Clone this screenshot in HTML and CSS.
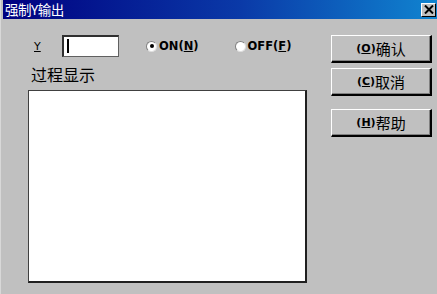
FILE: index.html
```html
<!DOCTYPE html>
<html>
<head>
<meta charset="utf-8">
<link rel="stylesheet" href="styles.css">
</head>
<body>
<div class="win">
  <div class="titlebar">
    <span class="title">强制Y输出</span>
    <span class="close">
      <svg width="10" height="9" viewBox="0 0 10 9"><path d="M1 0.5 L9 8.5 M9 0.5 L1 8.5" stroke="#000" stroke-width="2"/></svg>
    </span>
  </div>
  <div class="body">
    <div class="left">
      <div class="row1">
        <span class="ylabel"><u>Y</u></span>
        <span class="input"><span class="caret"></span></span>
        <span class="radio on"><span class="dot"></span></span>
        <span class="rlabel">ON(<u>N</u>)</span>
        <span class="radio off"></span>
        <span class="rlabel">OFF(<u>F</u>)</span>
      </div>
      <div class="caption">过程显示</div>
      <div class="box"></div>
    </div>
    <div class="right">
      <div class="btn"><span class="bl">(<u>O</u>)</span>确认</div>
      <div class="btn"><span class="bl">(<u>C</u>)</span>取消</div>
      <div class="btn help"><span class="bl">(<u>H</u>)</span>帮助</div>
    </div>
  </div>
</div>
</body>
</html>
```
FILE: styles.css
```css
html, body {
  margin: 0;
  padding: 0;
  background: #c0c0c0;
}
.win {
  width: 437px;
  height: 294px;
  box-sizing: border-box;
  background: #c0c0c0;
  border-left: 1px solid #d8d8d8;
  padding-left: 2px;
  font-family: "Noto Sans CJK SC", "DejaVu Sans", sans-serif;
  overflow: hidden;
}
.titlebar {
  height: 19px;
  background: linear-gradient(to right, #000080 0%, #0a3aa8 55%, #1084d0 100%);
  display: flex;
  align-items: center;
  justify-content: space-between;
  padding: 0 1px 0 2px;
  box-sizing: border-box;
}
.title {
  color: #fff;
  font-size: 13.5px;
  line-height: 19px;
  letter-spacing: -0.5px;
}
.close {
  width: 15px;
  height: 14px;
  box-sizing: border-box;
  background: #c0c0c0;
  border-top: 1px solid #fff;
  border-left: 1px solid #fff;
  border-right: 1px solid #000;
  border-bottom: 1px solid #000;
  display: flex;
  align-items: center;
  justify-content: center;
}
.body {
  display: flex;
}
.left {
  box-sizing: border-box;
  padding-left: 25px;
  padding-top: 16px;
  width: 304px;
  flex: none;
}
.row1 {
  display: flex;
  align-items: center;
  height: 22px;
}
.ylabel {
  font-family: "DejaVu Sans", sans-serif;
  font-size: 11px;
  margin-left: 6px;
  width: 10px;
}
.input {
  margin-left: 18px;
  width: 57px;
  height: 22px;
  box-sizing: border-box;
  background: #fff;
  border-top: 2px solid #303030;
  border-left: 2px solid #303030;
  border-right: 1px solid #606060;
  border-bottom: 1px solid #606060;
  position: relative;
}
.caret {
  position: absolute;
  left: 3px;
  top: 2px;
  width: 2px;
  height: 14px;
  background: #000;
}
.radio {
  width: 11px;
  height: 11px;
  border-radius: 50%;
  background: #fff;
  border-top: 1px solid #808080;
  border-left: 1px solid #808080;
  border-right: 1px solid #e0e0e0;
  border-bottom: 1px solid #e0e0e0;
  display: flex;
  align-items: center;
  justify-content: center;
  box-sizing: border-box;
}
.radio.on { margin-left: 27px; }
.radio.off { margin-left: 36px; }
.dot {
  width: 4px;
  height: 4px;
  border-radius: 50%;
  background: #000;
}
.rlabel {
  font-family: "DejaVu Sans", sans-serif;
  font-weight: bold;
  font-size: 11.5px;
  margin-left: 2px;
}
.caption {
  margin-top: 7px;
  font-size: 16px;
  line-height: 20px;
  padding-left: 3px;
}
.box {
  margin-top: 6px;
  width: 279px;
  height: 193px;
  box-sizing: border-box;
  background: #fff;
  border-top: 1px solid #404040;
  border-left: 1px solid #404040;
  border-right: 2px solid #202020;
  border-bottom: 2px solid #202020;
}
.right {
  padding-top: 16px;
  margin-left: 24px;
  display: flex;
  flex-direction: column;
  gap: 5px;
}
.btn {
  width: 101px;
  height: 28px;
  box-sizing: border-box;
  border-top: 1px solid #fff;
  border-left: 1px solid #fff;
  border-right: 2px solid #000;
  border-bottom: 2px solid #000;
  box-shadow: inset -1px -1px 0 #808080;
  display: flex;
  align-items: center;
  justify-content: center;
  font-size: 15px;
}
.bl {
  font-family: "DejaVu Sans", sans-serif;
  font-weight: bold;
  font-size: 11px;
}
.btn.help {
  margin-top: 8px;
}
```
